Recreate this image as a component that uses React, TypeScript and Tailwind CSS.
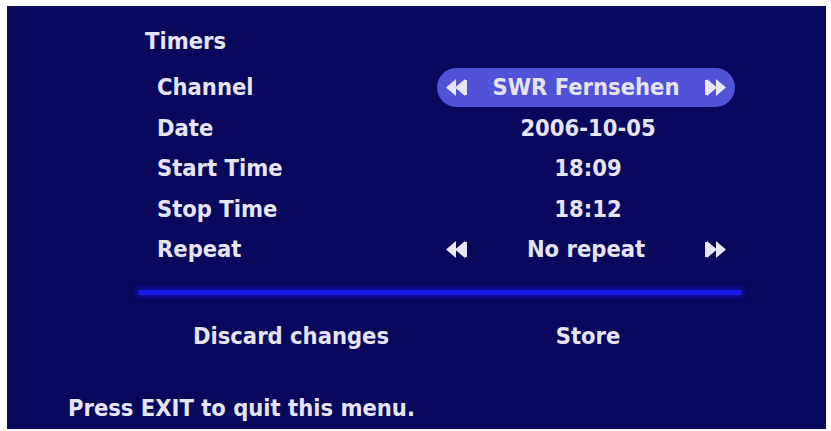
import type { ReactNode } from 'react'

const font = { fontFamily: '"DejaVu Sans Condensed", "DejaVu Sans", sans-serif' }

function Rewind({ flip = false }: { flip?: boolean }) {
  return (
    <svg width="22" height="19" viewBox="0 0 22 19" className={flip ? 'scale-x-[-1]' : ''}>
      <polygon points="0,9.5 10,1 10,18" fill="#e6e6f6" />
      <polygon points="9,9.5 19,1 19,18" fill="#e6e6f6" />
      <rect x="18" y="2" width="3" height="15" fill="#e6e6f6" />
    </svg>
  )
}

function Row({ label, children }: { label: string; children: ReactNode }) {
  return (
    <div className="flex h-[40.5px] items-center">
      <div className="w-[284px]">{label}</div>
      {children}
    </div>
  )
}

function Selector({ value, active = false }: { value: string; active?: boolean }) {
  return (
    <div
      className={`flex h-[39px] w-[298px] -ml-[4px] items-center justify-between rounded-full px-[9px] ${
        active ? 'bg-[#5252d8]' : ''
      }`}
    >
      <Rewind />
      <span>{value}</span>
      <Rewind flip />
    </div>
  )
}

export default function App() {
  return (
    <div className="h-[431px] w-[831px] bg-white pt-[6px] pl-[7px] pr-[5px] pb-[2px]" style={font}>
      <div className="h-full w-full bg-[#08085c] pt-[16px] text-[23.5px] font-bold text-[#e4e4f4]">
        {/* Title */}
        <div className="ml-[138px] mb-[5.5px] flex h-[40px] items-center">Timers</div>

        {/* Settings */}
        <div className="ml-[150px]">
          <Row label="Channel">
            <Selector value="SWR Fernsehen" active />
          </Row>
          <Row label="Date">
            <div className="w-[294px] text-center">2006-10-05</div>
          </Row>
          <Row label="Start Time">
            <div className="w-[294px] text-center">18:09</div>
          </Row>
          <Row label="Stop Time">
            <div className="w-[294px] text-center">18:12</div>
          </Row>
          <Row label="Repeat">
            <Selector value="No repeat" />
          </Row>
        </div>

        {/* Separator */}
        <div className="ml-[131px] mt-[20px] h-[5px] w-[604px] rounded-full bg-[#1a1ae6] shadow-[0_0_5px_2px_#1010b0]" />

        {/* Actions */}
        <div className="mt-[21.5px] flex h-[40px] items-center">
          <div className="ml-[134px] w-[300px] text-center">Discard changes</div>
          <div className="w-[294px] text-center">Store</div>
        </div>

        {/* Hint */}
        <div className="ml-[61px] mt-[37px] flex h-[30px] items-center">Press EXIT to quit this menu.</div>
      </div>
    </div>
  )
}
